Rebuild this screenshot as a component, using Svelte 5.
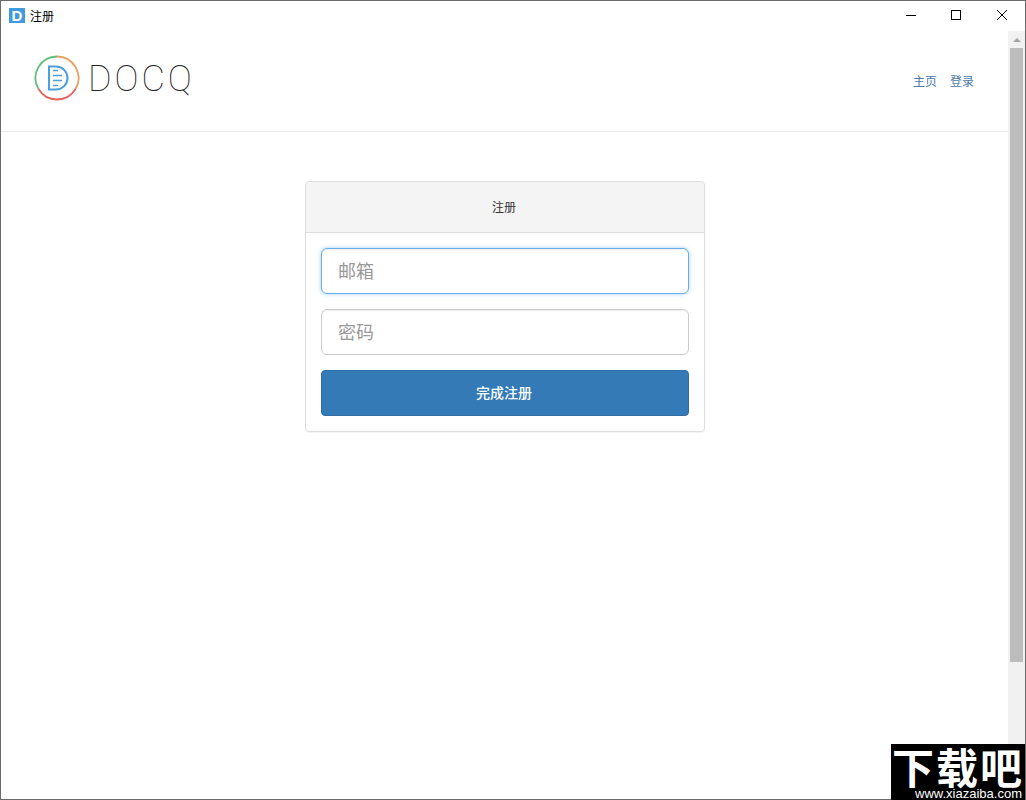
<script>
  let email = '';
  let password = '';
</script>

<div class="window">
  <div class="titlebar">
    <span class="app-icon">D</span>
    <span class="title">注册</span>
    <div class="controls">
      <svg width="10" height="10" viewBox="0 0 10 10"><path d="M0 5.500h10" stroke="#000" fill="none"/></svg>
      <svg width="10" height="10" viewBox="0 0 10 10"><rect x=".5" y=".5" width="9" height="9" stroke="#000" fill="none"/></svg>
      <svg class="close" width="10" height="10" viewBox="0 0 10 10"><path d="M0 0l10 10M10 0L0 10" stroke="#000" fill="none"/></svg>
    </div>
  </div>

  <div class="body">
    <div class="page">
      <header>
        <div class="logo">
          <svg width="46" height="46" viewBox="0 0 46 46" fill="none">
            <path d="M23 1.500A21.500 21.500 0 0 0 4.400 33.800" stroke="#63c07c" stroke-width="1.800"/>
            <path d="M23 1.500A21.500 21.500 0 0 1 41.600 33.800" stroke="#e6a066" stroke-width="1.800"/>
            <path d="M4.400 33.800A21.500 21.500 0 0 0 41.600 33.800" stroke="#e2655e" stroke-width="1.800"/>
            <path d="M15 11.500h7a11.500 11.500 0 0 1 0 23h-7z" stroke="#4a9fdc" stroke-width="2"/>
            <path d="M19 15.500h5M19 20.500h9M19 25.500h9M19 30.500h5" stroke="#4a9fdc" stroke-width="1.400"/>
          </svg>
          <span class="wordmark">DOCQ</span>
        </div>
        <nav>
          <a href="#home">主页</a>
          <a href="#login">登录</a>
        </nav>
      </header>

      <main>
        <div class="card">
          <div class="card-head">注册</div>
          <form class="card-body" on:submit|preventDefault>
            <input class="focused" type="text" placeholder="邮箱" bind:value={email} />
            <input type="password" placeholder="密码" bind:value={password} />
            <button type="submit">完成注册</button>
          </form>
        </div>
      </main>
    </div>

    <div class="scrollbar">
      <div class="arrow"></div>
      <div class="thumb"></div>
    </div>
  </div>

  <div class="watermark">
    <span class="wm-big">下载吧</span>
    <span class="wm-url">www.xiazaiba.com</span>
  </div>
</div>

<style>
  :global(body) {
    margin: 0;
    background: #fff;
  }

  .window {
    position: relative;
    box-sizing: border-box;
    width: 1026px;
    height: 800px;
    border: 1px solid #6b6b6b;
    display: flex;
    flex-direction: column;
    font-family: "Liberation Sans", "Noto Sans CJK SC", sans-serif;
    background: #fff;
  }

  .titlebar {
    flex: none;
    height: 30px;
    display: flex;
    align-items: center;
    padding: 0 0 2px 8px;
    box-sizing: border-box;
  }

  .app-icon {
    width: 16px;
    height: 15px;
    background: #3f9bdc;
    color: #fff;
    font-size: 15px;
    font-weight: bold;
    line-height: 15px;
    text-align: center;
  }

  .title {
    margin-left: 5px;
    font-size: 12px;
    color: #000;
  }

  .controls {
    margin-left: auto;
    margin-right: 18px;
    display: flex;
    gap: 35px;
  }

  .close {
    margin-left: 1px;
  }

  .body {
    flex: 1;
    display: flex;
    min-height: 0;
  }

  .page {
    flex: 1;
    min-width: 0;
  }

  header {
    height: 101px;
    box-sizing: border-box;
    border-bottom: 1px solid #eaeaea;
    display: flex;
    align-items: flex-start;
    justify-content: space-between;
    padding: 24px 34px 0 33px;
  }

  .logo {
    display: flex;
    align-items: flex-start;
    gap: 8px;
  }

  .wordmark {
    font-family: Roboto, "Liberation Sans", sans-serif;
    font-weight: 100;
    font-size: 36px;
    line-height: 46px;
    letter-spacing: 3px;
    padding-top: 1px;
    color: #222;
  }

  nav {
    display: flex;
    gap: 13px;
    padding-top: 19px;
  }

  nav a {
    font-size: 12px;
    line-height: 16px;
    color: #4f7aa8;
    text-decoration: none;
  }

  main {
    display: flex;
    justify-content: center;
    padding-top: 49px;
    padding-left: 1px;
  }

  .card {
    width: 400px;
    box-sizing: border-box;
    border: 1px solid #ddd;
    border-radius: 4px;
    box-shadow: 0 1px 1px rgba(0, 0, 0, 0.05);
    overflow: hidden;
  }

  .card-head {
    height: 51px;
    box-sizing: border-box;
    padding: 0 2px 2px 0;
    background: #f4f4f4;
    border-bottom: 1px solid #ddd;
    display: flex;
    align-items: center;
    justify-content: center;
    font-size: 12px;
    color: #333;
  }

  .card-body {
    padding: 15px;
    display: flex;
    flex-direction: column;
    gap: 15px;
  }

  input {
    height: 46px;
    box-sizing: border-box;
    padding: 2px 16px 0;
    border: 1px solid #ccc;
    border-radius: 6px;
    font-family: inherit;
    font-size: 18px;
    color: #555;
    outline: none;
    box-shadow: inset 0 1px 1px rgba(0, 0, 0, 0.075);
  }

  input::placeholder {
    color: #999;
  }

  input.focused {
    border-color: #66afe9;
    box-shadow: inset 0 1px 1px rgba(0, 0, 0, 0.075), 0 0 4px rgba(102, 175, 233, 0.6);
  }

  button {
    height: 46px;
    padding: 0 2px 2px 0;
    border: 1px solid #2e6da4;
    border-radius: 4px;
    background: #337ab7;
    color: #fff;
    font-family: inherit;
    font-size: 14px;
    font-weight: 500;
  }

  .scrollbar {
    flex: none;
    width: 17px;
    background: #f1f1f1;
    display: flex;
    flex-direction: column;
  }

  .arrow {
    height: 17px;
    display: flex;
    align-items: center;
    justify-content: center;
  }

  .arrow::before {
    content: "";
    border-left: 4px solid transparent;
    border-right: 4px solid transparent;
    border-bottom: 4px solid #a3a3a3;
  }

  .thumb {
    height: 614px;
    margin: 0 2px;
    background: #bcbcbc;
  }

  .watermark {
    position: absolute;
    right: 0;
    bottom: -1px;
    width: 134px;
    height: 56px;
    background: #000;
    color: #fff;
    display: flex;
    flex-direction: column;
    align-items: flex-end;
  }

  .wm-big {
    align-self: center;
    font-family: "Noto Sans CJK SC", sans-serif;
    font-weight: 700;
    font-size: 42px;
    letter-spacing: 2px;
    line-height: 44px;
    height: 44px;
  }

  .wm-url {
    font-family: "Liberation Sans", sans-serif;
    font-size: 13px;
    line-height: 12px;
    padding-right: 3px;
  }
</style>
